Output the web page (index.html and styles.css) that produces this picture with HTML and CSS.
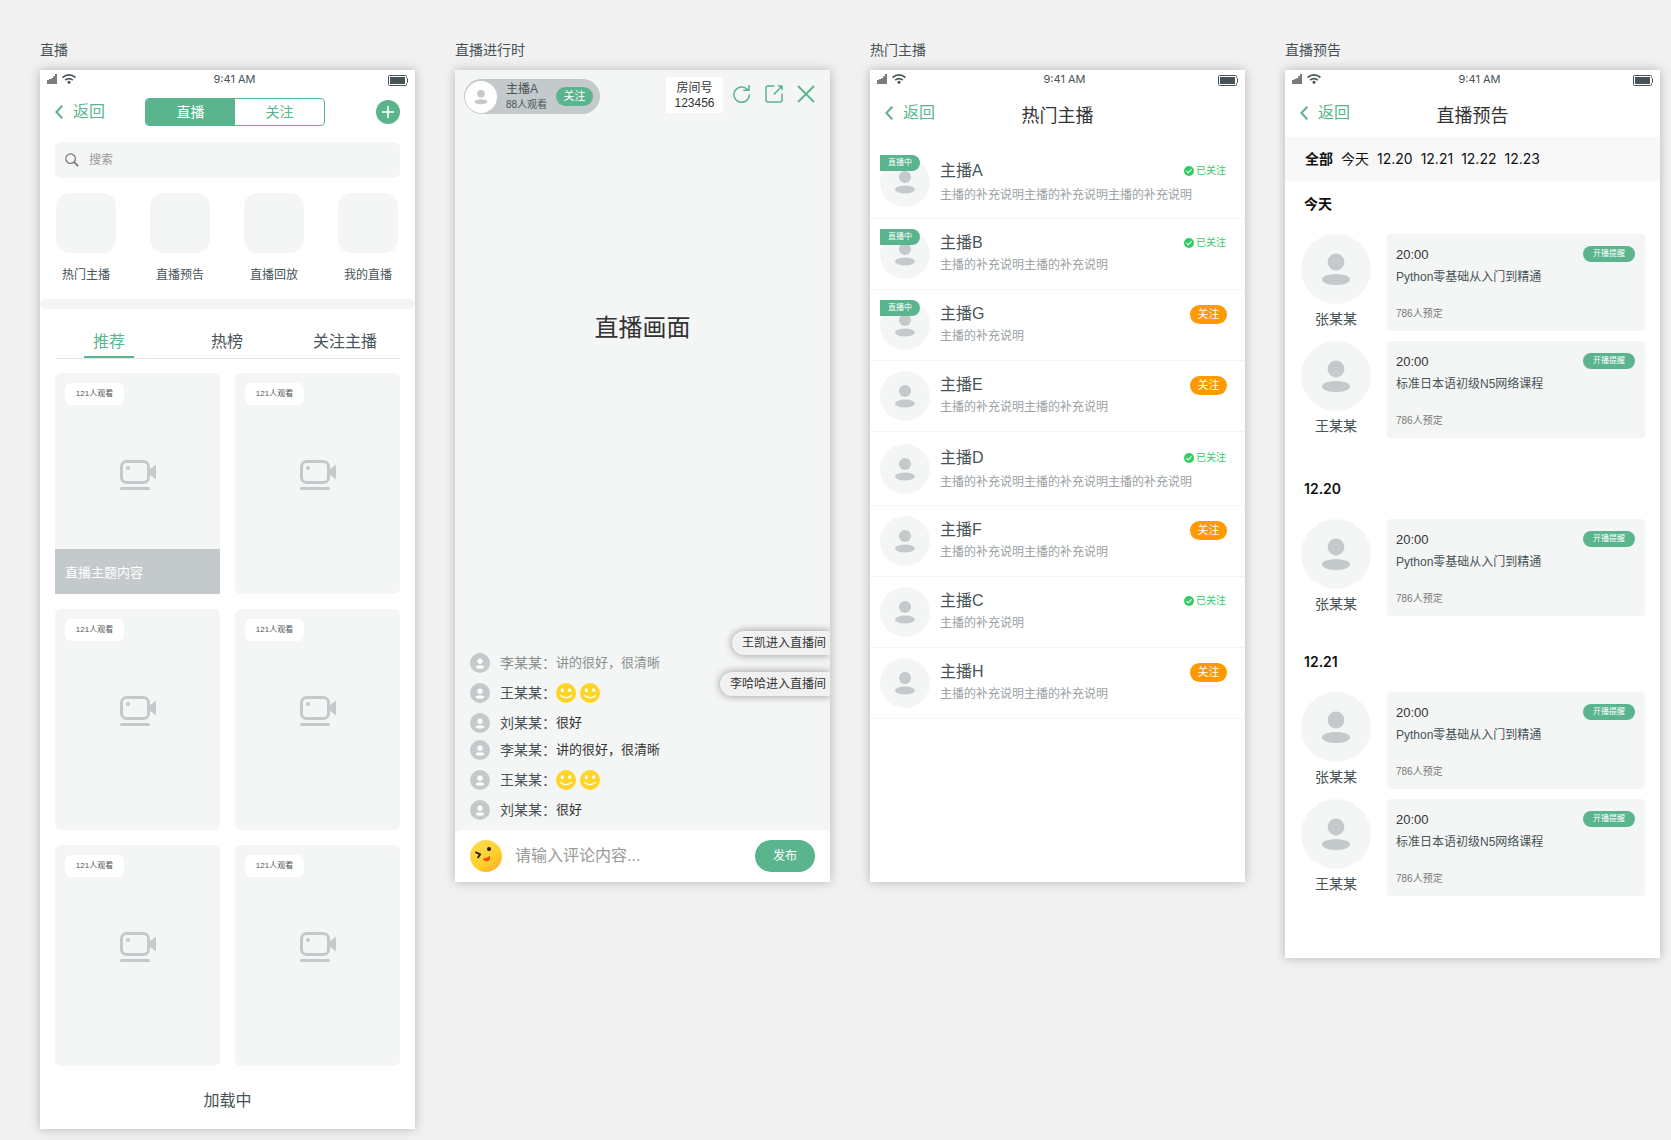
FILE: index.html
```html
<!DOCTYPE html>
<html lang="zh-CN">
<head>
<meta charset="utf-8">
<meta name="viewport" content="width=device-width, initial-scale=1">
<title>直播</title>
<link rel="stylesheet" href="styles.css">
</head>
<body>
<svg class="sprite" aria-hidden="true">
  <defs>
    <linearGradient id="wink-fill" x1="0.2" y1="0" x2="0.9" y2="1">
      <stop offset="0" stop-color="#fbdb52"/>
      <stop offset="0.6" stop-color="#ffd02a"/>
      <stop offset="1" stop-color="#fba62c"/>
    </linearGradient>
  </defs>
  <symbol id="signal" viewBox="0 0 10 10">
    <path fill="#7b7b7b" d="M0 6h2v4H0zM2 5h2.500v5H2zM4.500 4h2v6h-2zM6.200 2h2v8h-2zM8 0h2v10H8z"/>
  </symbol>
  <symbol id="wifi" viewBox="0 0 14 10">
    <g fill="none" stroke="#475357" stroke-width="1.700"><path d="M.6 3.500Q7-1.700 13.400 3.500M3.200 6.200Q7 3 10.800 6.200"/></g>
    <circle cx="7" cy="8.300" r="1.500" fill="#475357"/>
  </symbol>
  <symbol id="battery" viewBox="0 0 20 11">
    <path fill="none" stroke="#475357" d="M1.500.5h16q1 0 1 1v1l1 1v4l-1 1v1q0 1-1 1h-16q-1 0-1-1v-8q0-1 1-1z"/>
    <rect x="2" y="2" width="15" height="7" fill="#475357"/>
  </symbol>
  <symbol id="chevron" viewBox="0 0 8 14">
    <path fill="none" stroke="currentColor" stroke-width="2" d="M7.300.7 1.400 7l5.900 6.300"/>
  </symbol>
  <symbol id="plus" viewBox="0 0 12 12">
    <path stroke="currentColor" stroke-width="1.600" d="M6 0v12M0 6h12"/>
  </symbol>
  <symbol id="search" viewBox="0 0 14 14">
    <g fill="none" stroke="#777" stroke-width="1.200"><circle cx="5.600" cy="5.600" r="4.800"/><path stroke-width="1.700" d="m9.200 9.200 4 4"/></g>
  </symbol>
  <symbol id="camera" viewBox="0 0 36 30">
    <rect x="1.500" y="1.500" width="27" height="21" rx="5" fill="none" stroke="#c4c9cc" stroke-width="3"/>
    <circle cx="8" cy="8" r="2" fill="#c4c9cc"/>
    <path fill="#c4c9cc" d="M29 9h1l6-4.300v14.600L30 15h-1z"/>
    <rect y="27" width="30" height="3" rx="1.500" fill="#c4c9cc"/>
  </symbol>
  <symbol id="person" viewBox="0 0 50 50">
    <circle cx="25" cy="20" r="6"/><ellipse cx="25" cy="32.500" rx="10" ry="4"/>
  </symbol>
  <symbol id="person-small" viewBox="0 0 20 20">
    <circle cx="10" cy="8.200" r="2.600"/><ellipse cx="10" cy="14" rx="4.200" ry="1.700"/>
  </symbol>
  <symbol id="check" viewBox="0 0 10 10">
    <circle cx="5" cy="5" r="5" fill="#33cc66"/><path fill="none" stroke="#fff" stroke-width="1.100" d="m2.500 5.100 1.800 1.700 3.300-3.400"/>
  </symbol>
  <symbol id="refresh" viewBox="0 0 18 18">
    <path fill="none" stroke="currentColor" stroke-width="1.500" d="M16.400 9.500A7.700 7.700 0 1 1 14.300 4.300L15.500 5.300M16 0v5.300H10.300"/>
  </symbol>
  <symbol id="share" viewBox="0 0 18 18">
    <path fill="none" stroke="currentColor" stroke-width="1.500" d="M9.500 1H3Q1 1 1 3v12q0 2 2 2h12q2 0 2-2V8.500M8.800 9.400 15 3.200"/>
    <path fill="currentColor" d="M12.300.3h5.400v5.400z"/>
  </symbol>
  <symbol id="close" viewBox="0 0 18 18">
    <path stroke="currentColor" stroke-width="1.800" d="m1 1 16 16M17 1 1 17"/>
  </symbol>
  <symbol id="smile" viewBox="0 0 20 20">
    <circle cx="10" cy="10" r="10" fill="#ffd426"/>
    <ellipse cx="6.300" cy="7.200" rx="1.500" ry="1.900" fill="#fff"/><ellipse cx="13.600" cy="7.200" rx="1.500" ry="1.900" fill="#fff"/>
    <path fill="none" stroke="#fff" stroke-width="1.500" stroke-linecap="round" d="M4.500 12.500Q10 17 15.500 12.500"/>
  </symbol>
  <symbol id="wink" viewBox="0 0 32 32">
    <circle cx="16" cy="16" r="16" fill="url(#wink-fill)"/>
    <circle cx="19" cy="9" r="2" fill="#1c1a14"/>
    <path fill="none" stroke="#1c1a14" stroke-width="1.800" d="m5.400 12 4.700 2.400-2.400 3.600"/>
    <path fill="#fa4510" d="M12.800 18.800q4-.5 7.200-3.100.6 5-2.600 5.600-3.100.4-4.600-2.500z"/>
  </symbol>
</svg>

<main class="board">
  <section class="frame">
    <h2 class="frame__title">直播</h2>
    <div class="phone phone--home">
      <div class="status"><span class="status__left"><svg class="i-signal"><use href="#signal"/></svg><svg class="i-wifi"><use href="#wifi"/></svg></span><span>9:41 AM</span><svg class="i-battery"><use href="#battery"/></svg></div>
      <header class="nav">
        <a class="back" href="#"><svg><use href="#chevron"/></svg>返回</a>
        <div class="segment"><button class="segment__on">直播</button><button>关注</button></div>
        <button class="add" aria-label="添加"><svg><use href="#plus"/></svg></button>
      </header>
      <label class="search"><svg><use href="#search"/></svg><input type="search" placeholder="搜索" aria-label="搜索"></label>
      <nav class="shortcuts">
        <a href="#"><span class="tile"></span>热门主播</a>
        <a href="#"><span class="tile"></span>直播预告</a>
        <a href="#"><span class="tile"></span>直播回放</a>
        <a href="#"><span class="tile"></span>我的直播</a>
      </nav>
      <div class="band"></div>
      <nav class="tabs"><a class="tabs__on" href="#">推荐</a><a href="#">热榜</a><a href="#">关注主播</a></nav>
      <div class="rooms">
        <article class="room room--captioned"><span class="viewers">121人观看</span><svg class="i-camera"><use href="#camera"/></svg><p class="room__caption">直播主题内容</p></article>
        <article class="room"><span class="viewers">121人观看</span><svg class="i-camera"><use href="#camera"/></svg></article>
        <article class="room"><span class="viewers">121人观看</span><svg class="i-camera"><use href="#camera"/></svg></article>
        <article class="room"><span class="viewers">121人观看</span><svg class="i-camera"><use href="#camera"/></svg></article>
        <article class="room"><span class="viewers">121人观看</span><svg class="i-camera"><use href="#camera"/></svg></article>
        <article class="room"><span class="viewers">121人观看</span><svg class="i-camera"><use href="#camera"/></svg></article>
      </div>
      <p class="loading">加载中</p>
    </div>
  </section>

  <section class="frame">
    <h2 class="frame__title">直播进行时</h2>
    <div class="phone phone--live">
      <header class="live-bar">
        <div class="host">
          <svg class="host__face"><use href="#person"/></svg>
          <div class="host__text"><b>主播A</b><span>88人观看</span></div>
          <button class="pill">关注</button>
        </div>
        <div class="room-no"><span>房间号</span><span>123456</span></div>
        <div class="tools">
          <button aria-label="刷新"><svg><use href="#refresh"/></svg></button>
          <button aria-label="分享"><svg><use href="#share"/></svg></button>
          <button aria-label="关闭"><svg><use href="#close"/></svg></button>
        </div>
      </header>
      <p class="picture">直播画面</p>
      <div class="chat">
        <ul class="messages">
          <li class="faded"><svg class="face"><use href="#person-small"/></svg><b>李某某：</b><span>讲的很好，很清晰</span></li>
          <li><svg class="face"><use href="#person-small"/></svg><b>王某某：</b><svg class="smile"><use href="#smile"/></svg><svg class="smile"><use href="#smile"/></svg></li>
          <li><svg class="face"><use href="#person-small"/></svg><b>刘某某：</b><span>很好</span></li>
        </ul>
        <ul class="messages">
          <li><svg class="face"><use href="#person-small"/></svg><b>李某某：</b><span>讲的很好，很清晰</span></li>
          <li><svg class="face"><use href="#person-small"/></svg><b>王某某：</b><svg class="smile"><use href="#smile"/></svg><svg class="smile"><use href="#smile"/></svg></li>
          <li><svg class="face"><use href="#person-small"/></svg><b>刘某某：</b><span>很好</span></li>
        </ul>
        <div class="toasts"><p>王凯进入直播间</p><p>李哈哈进入直播间</p></div>
      </div>
      <form class="composer">
        <svg class="i-wink"><use href="#wink"/></svg>
        <input type="text" placeholder="请输入评论内容..." aria-label="评论内容">
        <button type="button">发布</button>
      </form>
    </div>
  </section>

  <section class="frame">
    <h2 class="frame__title">热门主播</h2>
    <div class="phone phone--hosts">
      <div class="status"><span class="status__left"><svg class="i-signal"><use href="#signal"/></svg><svg class="i-wifi"><use href="#wifi"/></svg></span><span>9:41 AM</span><svg class="i-battery"><use href="#battery"/></svg></div>
      <header class="nav nav--titled">
        <a class="back" href="#"><svg><use href="#chevron"/></svg>返回</a>
        <h1>热门主播</h1>
      </header>
      <ul class="hosts">
        <li class="tall"><div class="avatar"><svg><use href="#person"/></svg><span class="on-air">直播中</span></div><div class="info"><h3>主播A</h3><p>主播的补充说明主播的补充说明主播的补充说明</p></div><span class="followed"><svg><use href="#check"/></svg>已关注</span></li>
        <li><div class="avatar"><svg><use href="#person"/></svg><span class="on-air">直播中</span></div><div class="info"><h3>主播B</h3><p>主播的补充说明主播的补充说明</p></div><span class="followed"><svg><use href="#check"/></svg>已关注</span></li>
        <li><div class="avatar"><svg><use href="#person"/></svg><span class="on-air">直播中</span></div><div class="info"><h3>主播G</h3><p>主播的补充说明</p></div><button class="pill pill--orange">关注</button></li>
        <li><div class="avatar"><svg><use href="#person"/></svg></div><div class="info"><h3>主播E</h3><p>主播的补充说明主播的补充说明</p></div><button class="pill pill--orange">关注</button></li>
        <li class="tall"><div class="avatar"><svg><use href="#person"/></svg></div><div class="info"><h3>主播D</h3><p>主播的补充说明主播的补充说明主播的补充说明</p></div><span class="followed"><svg><use href="#check"/></svg>已关注</span></li>
        <li><div class="avatar"><svg><use href="#person"/></svg></div><div class="info"><h3>主播F</h3><p>主播的补充说明主播的补充说明</p></div><button class="pill pill--orange">关注</button></li>
        <li><div class="avatar"><svg><use href="#person"/></svg></div><div class="info"><h3>主播C</h3><p>主播的补充说明</p></div><span class="followed"><svg><use href="#check"/></svg>已关注</span></li>
        <li><div class="avatar"><svg><use href="#person"/></svg></div><div class="info"><h3>主播H</h3><p>主播的补充说明主播的补充说明</p></div><button class="pill pill--orange">关注</button></li>
      </ul>
    </div>
  </section>

  <section class="frame">
    <h2 class="frame__title">直播预告</h2>
    <div class="phone phone--schedule">
      <div class="status"><span class="status__left"><svg class="i-signal"><use href="#signal"/></svg><svg class="i-wifi"><use href="#wifi"/></svg></span><span>9:41 AM</span><svg class="i-battery"><use href="#battery"/></svg></div>
      <header class="nav nav--titled">
        <a class="back" href="#"><svg><use href="#chevron"/></svg>返回</a>
        <h1>直播预告</h1>
      </header>
      <nav class="dates"><a class="dates__on" href="#">全部</a><a href="#">今天</a><a href="#">12.20</a><a href="#">12.21</a><a href="#">12.22</a><a href="#">12.23</a></nav>
      <section class="day">
        <h3>今天</h3>
        <article class="lesson"><div class="teacher"><svg><use href="#person"/></svg>张某某</div><div class="slot"><div class="slot__top"><time>20:00</time><button>开播提醒</button></div><h4>Python零基础从入门到精通</h4><p>786人预定</p></div></article>
        <article class="lesson"><div class="teacher"><svg><use href="#person"/></svg>王某某</div><div class="slot"><div class="slot__top"><time>20:00</time><button>开播提醒</button></div><h4>标准日本语初级N5网络课程</h4><p>786人预定</p></div></article>
      </section>
      <section class="day">
        <h3>12.20</h3>
        <article class="lesson"><div class="teacher"><svg><use href="#person"/></svg>张某某</div><div class="slot"><div class="slot__top"><time>20:00</time><button>开播提醒</button></div><h4>Python零基础从入门到精通</h4><p>786人预定</p></div></article>
      </section>
      <section class="day">
        <h3>12.21</h3>
        <article class="lesson"><div class="teacher"><svg><use href="#person"/></svg>张某某</div><div class="slot"><div class="slot__top"><time>20:00</time><button>开播提醒</button></div><h4>Python零基础从入门到精通</h4><p>786人预定</p></div></article>
        <article class="lesson"><div class="teacher"><svg><use href="#person"/></svg>王某某</div><div class="slot"><div class="slot__top"><time>20:00</time><button>开播提醒</button></div><h4>标准日本语初级N5网络课程</h4><p>786人预定</p></div></article>
      </section>
    </div>
  </section>
</main>
</body>
</html>
```
FILE: styles.css
```css
:root {
  --green: #5ab48e;
  --ink: #475357;
  --soft: #f4f6f5;
  --grey: #c4c9cc;
}

* { box-sizing: border-box; margin: 0; padding: 0; }

body {
  background: #f1f1f1;
  color: var(--ink);
  font-family: "Liberation Sans", "Noto Sans CJK SC", sans-serif;
  font-size: 14px;
  line-height: 20px;
}

a { color: inherit; text-decoration: none; }
ul { list-style: none; }
svg { display: block; flex: none; }
button, input { border: 0; background: none; color: inherit; font: inherit; }
button { cursor: pointer; white-space: nowrap; }
input { outline: 0; min-width: 0; flex: 1; }
h1, h2, h3, h4, b { font-weight: 400; }
.sprite { position: absolute; width: 0; height: 0; }

.board {
  display: grid;
  grid-template-columns: repeat(4, minmax(0, 1fr));
  align-items: start;
  gap: 40px;
  padding: 40px 11px 11px 40px;
}
.frame__title { font-size: 14px; line-height: 20px; margin-bottom: 10px; }
.phone { background: #fff; box-shadow: 0 0 10px rgba(0, 0, 0, 0.25); }

/* status bar */
.status {
  display: flex;
  justify-content: space-between;
  align-items: center;
  height: 18px;
  padding: 0 7px;
  font: 11px/18px Inter, "Liberation Sans", sans-serif;
}
.status__left { display: flex; gap: 5px; width: 34px; }
.i-signal { width: 10px; height: 10px; }
.i-wifi { width: 14px; height: 10px; }
.i-battery { width: 20px; height: 11px; margin-top: 3px; }

/* navigation */
.nav {
  display: flex;
  align-items: center;
  gap: 40px;
  height: 48px;
  padding: 0 15px;
}
.back { display: flex; align-items: center; gap: 10px; color: var(--green); font-size: 16px; line-height: 26px; white-space: nowrap; }
.back svg { width: 8px; height: 14px; }
.nav--titled { display: grid; grid-template-columns: 1fr auto 1fr; align-items: start; padding-top: 12px; }
.nav--titled h1 { color: #333; font-size: 18px; line-height: 32px; }
.segment { display: flex; width: 180px; height: 28px; overflow: hidden; border: 1px solid var(--green); border-radius: 4px; color: var(--green); }
.segment button { flex: 1; }
.segment .segment__on { background: var(--green); color: #fff; }
.add { display: grid; place-items: center; width: 24px; height: 24px; margin-left: auto; border-radius: 50%; background: var(--green); color: #fff; }
.add svg { width: 12px; height: 12px; }

/* home */
.search { display: flex; align-items: center; gap: 10px; height: 36px; margin: 6px 15px 15px; padding: 0 10px; border-radius: 6px; background: var(--soft); font-size: 12px; }
.search svg { width: 14px; height: 14px; }
::placeholder { color: #999; opacity: 1; }
.shortcuts { display: flex; justify-content: space-between; padding: 0 17px 14px 16px; font-size: 12px; }
.shortcuts a { display: grid; justify-items: center; gap: 12px; width: 60px; }
.tile { width: 60px; height: 60px; border-radius: 14px; background: var(--soft); }
.band { height: 10px; border-radius: 5px; background: var(--soft); }
.tabs {
  display: grid;
  grid-template-columns: repeat(3, 1fr);
  justify-items: center;
  padding: 21px 11px 0 10px;
  font-size: 16px;
  line-height: 24px;
}
.tabs a { min-width: 50px; padding-bottom: 2px; border-bottom: 2px solid transparent; text-align: center; }
.tabs .tabs__on { color: var(--green); border-color: var(--green); }
.rooms { display: grid; grid-template-columns: 1fr 1fr; gap: 15px; margin: 0 15px; padding-top: 14px; border-top: 1px solid #e3e8e6; }
.room { display: grid; grid-template-rows: 22px 1fr 45px; height: 221px; padding-top: 10px; border-radius: 6px; background: var(--soft); }
.room--captioned { border-radius: 6px 6px 0 0; }
.viewers { width: 59px; margin-left: 10px; border-radius: 6px; background: #fff; color: #555; font-size: 8px; line-height: 22px; text-align: center; }
.i-camera { width: 36px; height: 30px; margin: 55px auto 0; }
.room__caption { padding: 0 10px; background: var(--grey); color: #fff; font-size: 13px; line-height: 47px; }
.loading { padding: 23px 0 16px; font-size: 16px; line-height: 24px; text-align: center; }

/* live room */
.phone--live { display: flex; flex-direction: column; background: var(--soft); }
.live-bar { display: flex; align-items: flex-start; padding: 7px 15px 0 9px; }
.host { display: flex; align-items: center; height: 35px; margin-top: 2px; padding: 1px 7px 1px 1px; border-radius: 18px; background: var(--grey); }
.host__face { width: 32px; height: 32px; border-radius: 50%; background: #fff; fill: var(--grey); }
.host__text { display: grid; width: 50px; margin-left: 9px; font-size: 12px; line-height: 15px; }
.host__text span { font-size: 10px; }
.pill { width: 37px; height: 19px; border-radius: 10px; background: var(--green); color: #fff; font-size: 11px; line-height: 19px; }
.pill--orange { background: #ff9900; }
.room-no { display: grid; width: 57px; height: 36px; margin: 0 10px 0 auto; padding: 4px 0; border-radius: 3px; background: #fff; color: #333; font-size: 12px; line-height: 15px; text-align: center; }
.tools { display: flex; gap: 14px; padding-top: 8px; color: var(--green); }
.tools svg { width: 18px; height: 18px; }
.picture { padding: 196px 0 277px; color: #333; font-size: 24px; line-height: 36px; text-align: center; }
.chat { position: relative; display: grid; gap: 7px; padding: 30px 15px 10px; overflow: hidden; }
.messages { display: grid; gap: 10px; }
.messages li { display: flex; align-items: center; height: 20px; font-size: 13px; }
.messages b { width: 56px; margin-left: 10px; font-size: 14px; white-space: nowrap; }
.messages span { color: #333; }
.messages .faded, .messages .faded span { color: #8a8f90; }
.face { width: 20px; height: 20px; border-radius: 50%; background: var(--grey); fill: #fff; }
.smile { width: 20px; height: 20px; margin-right: 4px; }
.toasts { position: absolute; top: 8px; right: 0; display: grid; justify-items: end; gap: 17px; color: #333; font-size: 12px; line-height: 24px; }
.toasts p { padding: 0 4px 0 10px; border-radius: 12px 0 0 12px; background: #f1f1f1; box-shadow: 0 0 8px rgba(0, 0, 0, 0.4); }
.composer { display: flex; align-items: center; gap: 13px; padding: 10px 15px; border-radius: 6px 6px 0 0; background: #fff; font-size: 16px; }
.i-wink { width: 32px; height: 32px; }
.composer button { width: 60px; height: 32px; border-radius: 16px; background: var(--green); color: #fff; font-size: 12px; }

/* popular hosts */
.phone--hosts { padding-bottom: 163px; }
.hosts { padding-top: 9px; }
.hosts li { display: flex; align-items: flex-start; height: 71px; padding: 10px 18px 0 10px; border-bottom: 1px solid #f3f5f4; }
.hosts .tall { height: 74px; padding-top: 12px; }
.avatar { position: relative; width: 50px; height: 50px; border-radius: 50%; background: var(--soft); }
.avatar svg { width: 50px; height: 50px; fill: var(--grey); }
.on-air { position: absolute; top: 0; left: 0; width: 40px; border-radius: 0 8px 8px 0; background: var(--green); color: #fff; font-size: 8px; line-height: 16px; text-align: center; }
.tall .on-air { top: -2px; }
.info { flex: 1; min-width: 0; margin-left: 10px; white-space: nowrap; }
.info h3 { font-size: 16px; line-height: 28px; }
.info p { color: #9aa1a4; font-size: 12px; line-height: 16px; }
.tall .info p { margin-top: 2px; }
.followed { display: flex; align-items: center; gap: 2px; height: 28px; margin-right: 1px; color: #33cc66; font-size: 10px; }
.followed svg { width: 10px; height: 10px; }
.hosts .pill { margin-top: 5px; }

/* schedule */
.phone--schedule { padding-bottom: 62px; }
.dates { display: flex; gap: 8px; margin-top: 1px; padding: 0 20px; background: #f8f8f8; color: #111; font-family: Inter, "Noto Sans CJK SC", sans-serif; line-height: 44px; }
.dates__on { font-weight: 700; }
.day { display: grid; gap: 10px; padding: 13px 15px 0 16px; }
.day + .day { padding-top: 41px; }
.day + .day:last-child { padding-top: 36px; }
.day h3 { margin: 0 3px 10px; color: #111; font-family: Inter, "Noto Sans CJK SC", sans-serif; font-size: 14px; font-weight: 600; }
.lesson { display: flex; gap: 16px; }
.teacher { display: grid; gap: 5px; width: 70px; text-align: center; align-content: start; }
.teacher svg { width: 70px; height: 70px; border-radius: 50%; background: var(--soft); fill: var(--grey); }
.slot { flex: 1; min-width: 0; height: 97px; padding: 12px 10px 0 9px; border-radius: 4px; background: var(--soft); }
.slot__top { display: flex; justify-content: space-between; }
.slot time { color: #333; font-size: 13px; line-height: 17px; }
.slot button { width: 52px; height: 16px; border-radius: 8px; background: var(--green); color: #fff; font-size: 8px; line-height: 16px; }
.slot h4 { padding: 4px 0 17px; font-size: 12px; line-height: 20px; }
.slot p { color: #777; font-size: 10px; line-height: 20px; }
```
